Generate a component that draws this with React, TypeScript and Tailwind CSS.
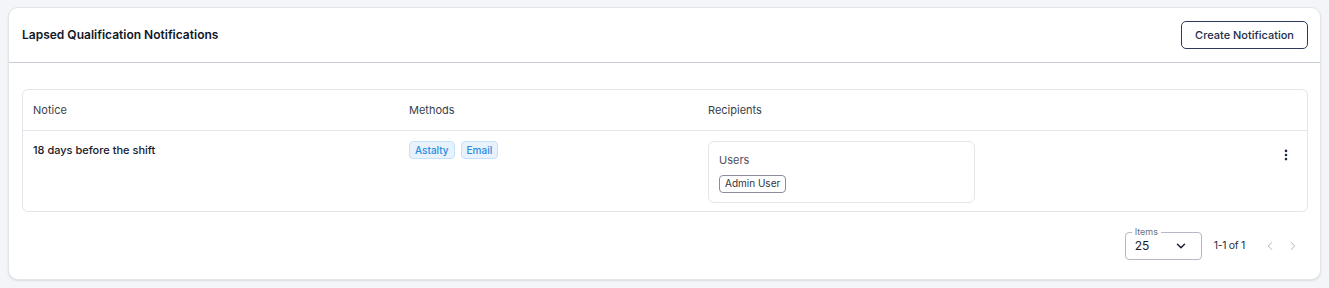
import { ChevronDown, ChevronLeft, ChevronRight, EllipsisVertical } from 'lucide-react'

const methods = ['Astalty', 'Email']

export default function App() {
  return (
    <div className="min-h-[288px] bg-[#f4f5f8] px-2 pt-[7px] pb-2 font-['Inter',sans-serif] text-[#1f2333]">
      <div className="rounded-[10px] border border-[#e3e5ea] bg-white shadow-[0_1px_2px_rgba(20,30,60,0.12)]">
        <div className="flex h-[54px] items-center justify-between pl-[13px] pr-[12px]">
          <div className="text-[12px] font-semibold text-[#111827]">Lapsed Qualification Notifications</div>
          <button
            type="button"
            className="h-[28px] rounded-[5px] border border-[#2e3a5c] px-[13px] text-[11px] font-medium text-[#232c4a]"
          >
            Create Notification
          </button>
        </div>
        <div className="h-px bg-[#c9cdd8]" />

        <div className="pl-[13px] pr-[12px] pt-[26px] pb-[19px]">
          <div className="rounded-[6px] border border-[#e3e5ea]">
            <div className="grid h-[41px] grid-cols-[376px_299px_1fr_40px] items-center border-b border-[#e3e5ea] px-[10px] text-[11px] text-[#3a3f4c]">
              <div>Notice</div>
              <div>Methods</div>
              <div>Recipients</div>
              <div />
            </div>
            <div className="grid grid-cols-[376px_299px_1fr_40px] px-[10px] pt-[10px] pb-[8px] text-[11px]">
              <div className="pt-px font-medium text-[#15192a]">18 days before the shift</div>
              <div className="flex gap-[6px]">
                {methods.map((m) => (
                  <span
                    key={m}
                    className="flex h-[18px] items-center rounded-[4px] border border-[#c6e0f7] bg-[#e7f2fc] px-[5px] text-[10px] font-medium text-[#2a8ae0]"
                  >
                    {m}
                  </span>
                ))}
              </div>
              <div>
                <div className="w-[267px] rounded-[6px] border border-[#e3e5ea] px-[10px] pt-[10px] pb-[9px]">
                  <div className="text-[11px] text-[#4b5060]">Users</div>
                  <div className="mt-[6px] flex">
                    <span className="flex h-[18px] items-center rounded-[4px] border border-[#8a8e99] px-[5px] text-[10px] text-[#2f3340]">
                      Admin User
                    </span>
                  </div>
                </div>
              </div>
              <div className="flex justify-end pt-[7px] pr-[4px]">
                <EllipsisVertical size={14} strokeWidth={2.5} className="text-[#1e2a4a]" />
              </div>
            </div>
          </div>

          <div className="mt-[20px] flex items-center justify-end pr-[8px]">
            <div className="relative h-[28px] w-[77px] rounded-[4px] border border-[#b5b9c3]">
              <span className="absolute -top-[7px] left-[6px] bg-white px-[3px] text-[9px] leading-[12px] text-[#6b7080]">
                Items
              </span>
              <div className="flex h-full items-center justify-between pl-[9px] pr-[13px]">
                <span className="text-[12px] text-[#1a1e2b]">25</span>
                <ChevronDown size={14} strokeWidth={2.5} className="text-[#1a1e2b]" />
              </div>
            </div>
            <div className="ml-[12px] text-[10.5px] tracking-[-0.3px] text-[#2a2e3a]">1-1 of 1</div>
            <div className="ml-[18px] flex gap-[9px] text-[#a3a7b1]">
              <ChevronLeft size={14} strokeWidth={1.5} />
              <ChevronRight size={14} strokeWidth={1.5} />
            </div>
          </div>
        </div>
      </div>
    </div>
  )
}
